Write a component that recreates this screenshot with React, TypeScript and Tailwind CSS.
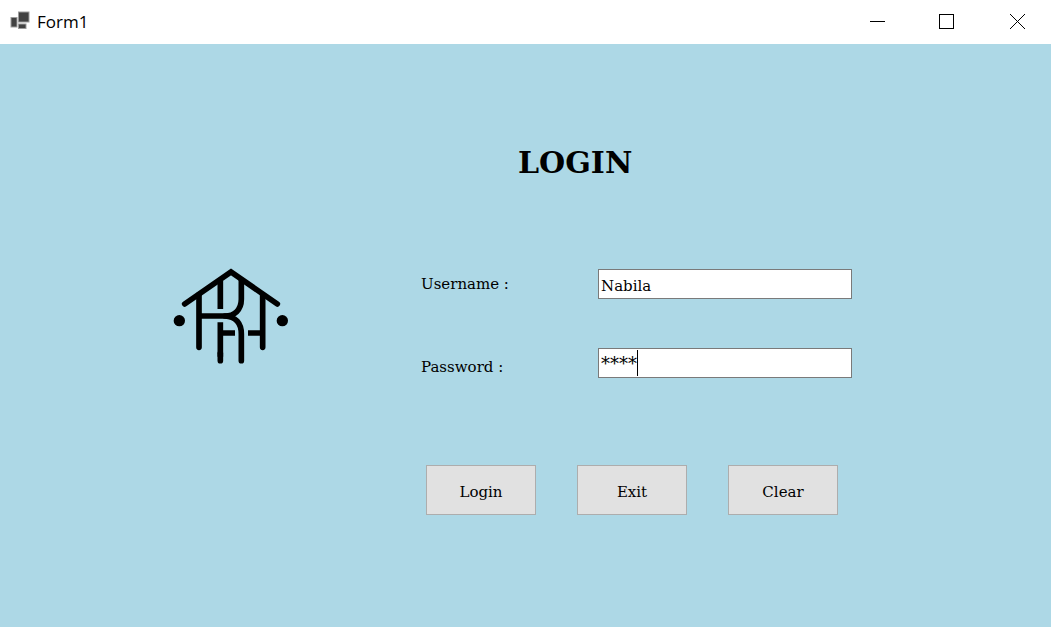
import { useState } from 'react';
import type { ReactNode } from 'react';

function FormIcon() {
  return (
    <svg width="20" height="24" viewBox="0 0 20 24" aria-hidden="true">
      <g stroke="#9b9b9b" strokeWidth="1" fill="#414141">
        <rect x="8.5" y="2" width="10.5" height="10" />
        <rect x="1" y="7.5" width="6" height="9.5" />
        <rect x="8.5" y="14" width="7.5" height="4.5" />
      </g>
    </svg>
  );
}

function HouseLogo() {
  return (
    <svg
      className="h-[97px] w-[116px] shrink-0"
      viewBox="24 21 348 291"
      fill="none"
      stroke="#000"
      strokeWidth="17"
      role="img"
      aria-label="House logo"
    >
      <path d="M59 132L198 36L337 132" strokeLinecap="round" strokeLinejoin="miter" />
      <path d="M102 104V262M293 104V262" strokeLinecap="round" />
      <path d="M166 62V147M166 187V290" />
      <path d="M166 280V302" strokeLinecap="round" />
      <path d="M166 219H210M249 219H293" />
      <path d="M229 60V118C229 150 208 168 180 168H102" />
      <path d="M180 168C212 170 229 190 229 222V302" strokeLinecap="round" />
      <circle cx="43" cy="182" r="17" fill="#000" stroke="none" />
      <circle cx="352" cy="182" r="17" fill="#000" stroke="none" />
    </svg>
  );
}

function WindowButton({ label, children }: { label: string; children: ReactNode }) {
  return (
    <button
      type="button"
      aria-label={label}
      className="flex w-[70px] items-center justify-center hover:bg-gray-200"
    >
      <svg width="20" height="20" viewBox="0 0 20 20" fill="none" stroke="#000" aria-hidden="true">
        {children}
      </svg>
    </button>
  );
}

const actionClass =
  'h-[50px] w-[110px] border border-[#adadad] bg-[#e1e1e1] pt-1.5 text-[15px] hover:bg-[#e5f1fb]';
const inputClass =
  'h-[30px] w-full border border-[#7a7a7a] bg-white px-0.5 outline-none';

export default function App() {
  const [username, setUsername] = useState('Nabila');
  const [secret, setSecret] = useState('1234');

  const clear = () => {
    setUsername('');
    setSecret('');
  };

  const updateSecret = (shown: string) => {
    const added = shown.replace(/\*/g, '');
    const kept = secret.slice(0, shown.length - added.length);
    setSecret(kept + added);
  };

  return (
    <div className="flex min-h-screen flex-col bg-[#add8e6] text-black">
      <header className="flex h-11 items-stretch justify-between bg-white">
        <div className="flex items-center gap-[7px] pl-2.5 font-['Open_Sans',sans-serif] text-[17px]">
          <FormIcon />
          <span>Form1</span>
        </div>
        <div className="flex">
          <WindowButton label="Minimize">
            <path d="M4 9.5H19" />
          </WindowButton>
          <WindowButton label="Maximize">
            <rect x="3.5" y="2.5" width="14" height="14" />
          </WindowButton>
          <WindowButton label="Close">
            <path d="M4 2L19 17M19 2L4 17" />
          </WindowButton>
        </div>
      </header>

      <main className="flex flex-1 items-start justify-center pr-[26px] font-['DejaVu_Serif',serif]">
        <div className="mr-[132px] pt-[223px]">
          <HouseLogo />
        </div>
        <form className="w-[431px] pt-[101px]" onSubmit={(e) => e.preventDefault()}>
          <h1 className="pl-[97px] text-[30px] leading-9 font-bold">LOGIN</h1>

          <div className="mt-[88px] grid grid-cols-[177px_1fr] gap-y-[49px] text-[15px]">
            <label htmlFor="username" className="pt-1">
              Username :
            </label>
            <input
              id="username"
              className={`${inputClass} pt-1`}
              value={username}
              onChange={(e) => setUsername(e.target.value)}
            />
            <label htmlFor="password" className="pt-2">
              Password :
            </label>
            <div className="relative h-[30px]">
              <input
                id="password"
                autoComplete="off"
                className={`${inputClass} text-lg caret-transparent`}
                value={'*'.repeat(secret.length)}
                onChange={(e) => updateSecret(e.target.value)}
              />
              <span
                className="pointer-events-none absolute top-0.5 h-[26px] w-px bg-black"
                style={{ left: 3 + secret.length * 9 }}
              />
            </div>
          </div>

          <div className="mt-[86px] flex gap-[41px] pl-[5px]">
            <button type="submit" className={actionClass}>
              Login
            </button>
            <button type="button" className={actionClass}>
              Exit
            </button>
            <button type="button" className={actionClass} onClick={clear}>
              Clear
            </button>
          </div>
        </form>
      </main>
    </div>
  );
}
